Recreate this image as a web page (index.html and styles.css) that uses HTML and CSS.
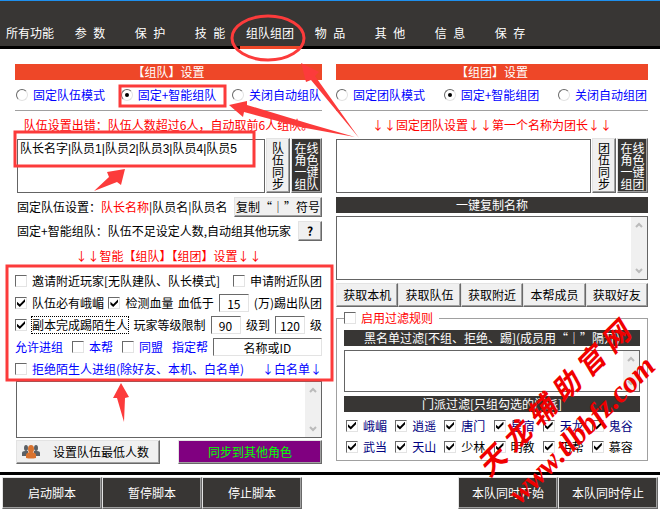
FILE: index.html
```
<!DOCTYPE html>
<html lang="zh-CN">
<head>
    <meta charset="UTF-8">
    <title>组队组团</title>
    <link rel="stylesheet" href="styles.css">
</head>
<body>
<div id="wrap">

    <nav class="nav">
        <a href="#">所有功能</a>
        <a href="#">参  数</a>
        <a href="#">保  护</a>
        <a href="#">技  能</a>
        <a href="#" class="on">组队组团</a>
        <a href="#">物  品</a>
        <a href="#">其  他</a>
        <a href="#">信  息</a>
        <a href="#">保  存</a>
    </nav>

    <div class="main">
        <!-- 组队 -->
        <div class="col team">
            <h2 class="title red">【组队】设置</h2>
            <div class="radios">
                <label><input type="radio" name="team">固定队伍模式</label>
                <label><input type="radio" name="team" checked>固定+智能组队</label>
                <label><input type="radio" name="team">关闭自动组队</label>
            </div>
            <p class="tip">队伍设置出错：队伍人数超过6人，自动取前6人组队。</p>
            <div class="names">
                <textarea aria-label="队伍名单">队长名字|队员1|队员2|队员3|队员4|队员5</textarea>
                <button class="btn tall">队伍同步</button>
                <button class="btn tall dark">在线角色一键组队</button>
            </div>
            <div class="line">
                <p>固定队伍设置：<span class="warn">队长名称</span>|队员名|队员名</p>
                <button class="btn copy">复制“｜”符号</button>
            </div>
            <div class="line">
                <p>固定+智能组队：队伍不足设定人数,自动组其他玩家</p>
                <button class="btn help">?</button>
            </div>
            <h3 class="tip sub">↓↓智能【组队】【组团】设置↓↓</h3>
            <div class="opts">
                <div class="row">
                    <label><input type="checkbox">邀请附近玩家[无队建队、队长模式]</label>
                    <label><input type="checkbox">申请附近队团</label>
                </div>
                <div class="row">
                    <label><input type="checkbox" checked>队伍必有峨嵋</label>
                    <label><input type="checkbox" checked>检测血量</label>
                    <label class="num">血低于<input type="text" value="15">(万)踢出队团</label>
                </div>
                <div class="row">
                    <label><input type="checkbox" checked><span class="focus">副本完成踢陌生人</span></label>
                    <label class="num">玩家等级限制<input type="text" value="90"></label>
                    <label class="num">级到<input type="text" value="120">级</label>
                </div>
                <div class="row blue">
                    <span>允许进组</span>
                    <label><input type="checkbox">本帮</label>
                    <label><input type="checkbox">同盟</label>
                    <label class="num">指定帮<input type="text" class="long" value="名称或ID"></label>
                </div>
                <div class="row blue">
                    <label><input type="checkbox">拒绝陌生人进组(除好友、本机、白名单)</label>
                    <span>↓白名单↓</span>
                </div>
            </div>
            <div class="scroll white">
                <textarea aria-label="白名单"></textarea>
                <div class="track">
                    <svg width="8" height="6" viewBox="0 0 8 6"><path d="M1 5L4 2L7 5"/></svg>
                    <svg width="8" height="6" viewBox="0 0 8 6"><path d="M1 1L4 4L7 1"/></svg>
                </div>
            </div>
            <div class="acts">
                <button class="btn low">
                    <svg class="people" width="18" height="14" viewBox="0 0 18 14">
                        <g fill="#5b6065">
                            <ellipse cx="4" cy="3" rx="2" ry="3"/>
                            <path d="M0 11V8Q0 6 3 6H6V11z"/>
                            <ellipse cx="14" cy="3" rx="2" ry="3"/>
                            <path d="M18 11V8Q18 6 15 6H12V11z"/>
                        </g>
                        <g fill="#d9722e">
                            <ellipse cx="9" cy="4" rx="3" ry="4"/>
                            <path d="M4 13V10Q4 8 8 7H10Q14 8 14 10V13Q9 14 4 13z"/>
                        </g>
                    </svg>
                    设置队伍最低人数
                </button>
                <button class="btn sync">同步到其他角色</button>
            </div>
        </div>

        <!-- 组团 -->
        <div class="col group">
            <h2 class="title red">【组团】设置</h2>
            <div class="radios">
                <label><input type="radio" name="group">固定团队模式</label>
                <label><input type="radio" name="group" checked>固定+智能组团</label>
                <label><input type="radio" name="group">关闭自动组团</label>
            </div>
            <p class="tip">↓↓固定团队设置↓↓第一个名称为团长↓↓</p>
            <div class="names">
                <textarea aria-label="团队名单"></textarea>
                <button class="btn tall">团伍同步</button>
                <button class="btn tall dark">在线角色一键组团</button>
            </div>
            <h2 class="title">一键复制名称</h2>
            <div class="scroll copylist">
                <textarea aria-label="名称"></textarea>
                <div class="track">
                    <svg width="8" height="6" viewBox="0 0 8 6"><path d="M1 5L4 2L7 5"/></svg>
                    <svg width="8" height="6" viewBox="0 0 8 6"><path d="M1 1L4 4L7 1"/></svg>
                </div>
            </div>
            <div class="gets">
                <button class="btn">获取本机</button>
                <button class="btn">获取队伍</button>
                <button class="btn">获取附近</button>
                <button class="btn">本帮成员</button>
                <button class="btn">获取好友</button>
            </div>
            <fieldset class="filter">
                <legend><label><input type="checkbox">启用过滤规则</label></legend>
                <h2 class="title">黑名单过滤[不组、拒绝、踢](成员用“｜”隔开)</h2>
                <div class="scroll black">
                    <textarea aria-label="黑名单"></textarea>
                    <div class="track">
                        <svg width="8" height="6" viewBox="0 0 8 6"><path d="M1 5L4 2L7 5"/></svg>
                        <svg width="8" height="6" viewBox="0 0 8 6"><path d="M1 1L4 4L7 1"/></svg>
                    </div>
                </div>
                <h2 class="title">门派过滤[只组勾选的门派]</h2>
                <div class="sects">
                    <label class="navy"><input type="checkbox" checked>峨嵋</label>
                    <label class="navy"><input type="checkbox" checked>逍遥</label>
                    <label class="navy"><input type="checkbox" checked>唐门</label>
                    <label class="navy"><input type="checkbox" checked>星宿</label>
                    <label class="navy"><input type="checkbox" checked>天龙</label>
                    <label class="navy"><input type="checkbox" checked>鬼谷</label>
                    <label class="navy"><input type="checkbox" checked>武当</label>
                    <label class="navy"><input type="checkbox" checked>天山</label>
                    <label><input type="checkbox" checked>少林</label>
                    <label><input type="checkbox" checked>明教</label>
                    <label><input type="checkbox" checked>丐帮</label>
                    <label><input type="checkbox" checked>慕容</label>
                </div>
            </fieldset>
        </div>
    </div>

    <div class="foot">
        <button class="btn dark">启动脚本</button>
        <button class="btn dark">暂停脚本</button>
        <button class="btn dark">停止脚本</button>
        <button class="btn dark right">本队同时开始</button>
        <button class="btn dark">本队同时停止</button>
    </div>

    <!-- 标注和水印 -->
    <svg class="mark" width="660" height="510" viewBox="0 0 660 510">
        <g fill="none" stroke="#fc3b3b" stroke-width="3">
            <ellipse cx="268" cy="38" rx="36" ry="22"/>
            <rect x="120" y="86" width="105" height="20"/>
            <rect x="15" y="132" width="239" height="34"/>
            <rect x="7" y="266" width="325" height="114"/>
        </g>
        <g fill="#fc3b3b">
            <path d="M301 63L319 72L315 76L359 138L311 80L306 82z"/>
            <path d="M229 105L247 101L247 105L310 124L355 137L300 127L244 112L243 117z"/>
            <path d="M125 169L107 172L109 177L94 191L117 182L121 185z"/>
            <path d="M121 383L113 398L117 398L124 422L125 398L129 397z"/>
        </g>
        <g class="water">
            <text transform="translate(489 478) rotate(-45)">天 龙 辅 助 官 网</text>
            <text class="url" transform="translate(520 505) rotate(-45)">www.tlbbfz.com</text>
        </g>
    </svg>
</div>
</body>
</html>
```

FILE: styles.css
```
*{box-sizing:border-box;}
body,h2,h3,p{margin:0;}
body,button,input,textarea{
    font-family:"Noto Sans CJK SC","Liberation Sans",sans-serif;
    font-size:12px;
    line-height:16px;
    color:#000;
}
body{background-color:#fff;}
h2,h3{font-size:12px;font-weight:normal;}

#wrap{
    position:relative;
    display:flex;
    flex-direction:column;
    min-height:100vh;
    overflow:hidden;
    white-space:nowrap;
}

/* 导航 */
.nav{
    display:flex;
    height:49px;
    padding-top:20px;
    border-top:1px solid #1e90ee;
    background:linear-gradient(#000,#000) bottom/100% 3px no-repeat #383634;
    font-family:"Liberation Sans","Noto Sans CJK SC",sans-serif;
}
.nav a{
    width:60px;
    height:28px;
    line-height:26px;
    color:#fff;
    text-align:center;
    text-decoration:none;
    white-space:pre;
}
.nav a.on{border-bottom:3px solid #ee4728;}

.main{
    flex:1;
    display:grid;
    grid-template-columns:307fr 312fr;
    gap:14px;
    padding:15px 12px 8px 15px;
}
.col{
    display:flex;
    flex-direction:column;
    min-width:0;
}
.title{
    height:16px;
    background-color:#383634;
    color:#fff;
    text-align:center;
}
.title.red{background-color:#ee4728;}

label{
    display:flex;
    align-items:center;
    gap:5px;
}
input{margin:0;}
input[type=radio],input[type=checkbox]{
    appearance:none;
    flex:none;
    width:12px;
    height:12px;
    border:1px solid;
    border-color:#696969 #e3e3e3 #e3e3e3 #696969;
    background-color:#fff;
}
input[type=radio]{border-radius:50%;}
input[type=radio]:checked::before{
    content:"";
    display:block;
    width:4px;
    height:4px;
    margin:3px;
    border-radius:50%;
    background-color:#000;
}
input[type=checkbox]:checked::before{
    content:"";
    display:block;
    width:8px;
    height:8px;
    margin:1px;
    background-color:#000;
    clip-path:polygon(0 35%,35% 65%,100% 0,100% 35%,35% 100%,0 70%);
}
input[type=text]{
    width:30px;
    height:18px;
    padding:0;
    border:1px solid;
    border-color:#696969 #e3e3e3 #e3e3e3 #696969;
    text-align:center;
}
input[type=text].long{width:109px;}
textarea{
    display:block;
    flex:1;
    min-width:0;
    margin:0;
    padding:1px 2px;
    border:1px solid #646464;
    background-color:#fff;
    font-family:"Liberation Sans","Noto Sans CJK SC",sans-serif;
    resize:none;
    overflow:hidden;
}

.btn{
    padding:0;
    border:1px solid;
    border-color:#e3e3e3 #696969 #696969 #e3e3e3;
    box-shadow:inset -1px -1px #a0a0a0;
    background-color:#f0f0f0;
    text-align:center;
}
.btn.dark{
    background-color:#383634;
    color:#fff;
}

.radios{
    display:flex;
    justify-content:space-between;
    height:31px;
    padding-right:1px;
    border-bottom:1px solid #a0a0a0;
    color:#00f;
}
.team .radios{padding-left:1px;}
.tip{
    height:27px;
    line-height:28px;
    color:#f00;
    text-align:center;
}
.warn{color:#f00;}

.names{
    display:flex;
    gap:1px;
    height:55px;
}
.team .names{padding-left:2px;}
.names textarea{margin-top:1px;}
.btn.tall{
    width:24px;
    padding:0 5px;
    line-height:12px;
    white-space:normal;
    word-break:break-all;
}
.btn.tall.dark{
    width:31px;
    padding:0 2px;
}

.line{
    display:flex;
    align-items:center;
    height:24px;
    padding-left:2px;
}
.line p{
    flex:1;
    min-width:0;
}
.names + .line{margin-top:2px;}
.btn.copy{
    width:88px;
    height:20px;
}
.btn.help{
    width:24px;
    height:20px;
    font-weight:bold;
}
.tip.sub{
    height:27px;
    line-height:26px;
}

.opts{padding-bottom:1px;}
.opts .row{
    display:flex;
    align-items:center;
    justify-content:space-between;
    height:22px;
}
.blue{color:#00f;}
.focus{outline:1px dotted #000;}

.scroll{
    display:flex;
    border:1px solid #646464;
}
.scroll textarea{border:none;}
.track{
    display:flex;
    flex-direction:column;
    justify-content:space-between;
    align-items:center;
    width:16px;
    padding:5px 0;
    background-color:#f0f0f0;
}
.track svg{
    fill:none;
    stroke:#bbb;
    stroke-width:2;
}
.scroll.white{
    height:57px;
    margin-left:1px;
}
.acts{
    display:flex;
    justify-content:space-between;
    margin:2px 0 0 1px;
}
.acts .btn{height:24px;}
.btn.low{
    display:flex;
    align-items:center;
    gap:13px;
    width:144px;
    padding-left:5px;
}
.btn.sync{
    width:144px;
    background-color:#800080;
    color:#0f0;
}

/* 组团 */
.names + .title{margin-top:4px;}
.scroll.copylist{
    height:64px;
    margin-top:3px;
}
.gets{
    display:flex;
    margin-top:3px;
}
.gets .btn{
    flex:1;
    height:24px;
}
.filter{
    min-width:0;
    margin:3px 0 0;
    padding:4px 7px 0;
    border:1px solid #a0a0a0;
}
.filter legend{
    padding:0 6px 0 0;
    color:#f00;
}
.scroll.black{
    height:42px;
    margin:4px 0;
}
.sects{
    display:grid;
    grid-template-columns:repeat(5,49fr) 46fr;
    height:48px;
    padding:3px 2px;
}
.navy{color:#000080;}

/* 底部 */
.foot{
    display:flex;
    padding:2px 2px 4px;
    border-top:3px solid #000;
}
.foot .btn{
    width:100px;
    height:32px;
}
.foot .right{margin-left:auto;}

.mark{
    position:absolute;
    top:0;
    left:0;
    pointer-events:none;
}
.water{
    fill:#f00000;
    font-family:"Liberation Serif","Noto Sans CJK SC",serif;
    font-size:28px;
    font-style:italic;
    font-weight:bold;
}
.water .url{font-size:30px;}
```
